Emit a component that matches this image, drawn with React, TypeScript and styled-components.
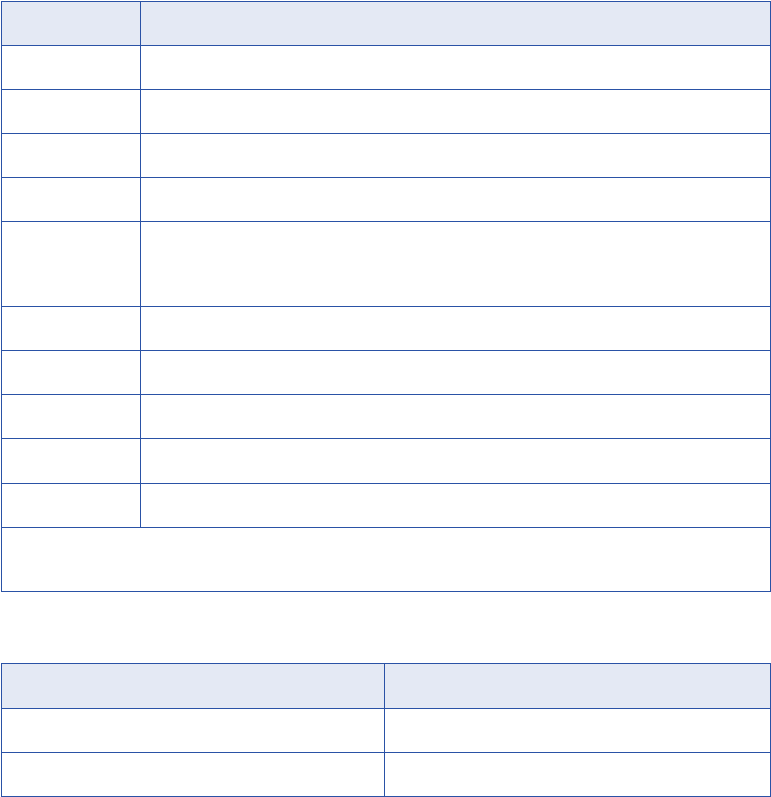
import styled, { createGlobalStyle } from "styled-components";

const GlobalStyle = createGlobalStyle`
  body {
    margin: 0;
    background: #ffffff;
    font-family: "Liberation Sans", Arial, sans-serif;
  }
`;

const firstRows = [44, 44, 44, 44, 85, 44, 44, 44, 45, 44];
const secondRows = [44, 44];

const App = () => {
  return (
    <Page>
      <GlobalStyle />
      <Table>
        <colgroup>
          <col style={{ width: 139 }} />
          <col />
        </colgroup>
        <thead>
          <Row $height={44}>
            <HeadCell />
            <HeadCell />
          </Row>
        </thead>
        <tbody>
          {firstRows.map((h, i) => (
            <Row key={i} $height={h}>
              <Cell />
              <Cell />
            </Row>
          ))}
          <Row $height={64}>
            <Cell colSpan={2} />
          </Row>
        </tbody>
      </Table>
      <Table>
        <colgroup>
          <col style={{ width: 383 }} />
          <col />
        </colgroup>
        <thead>
          <Row $height={45}>
            <HeadCell />
            <HeadCell />
          </Row>
        </thead>
        <tbody>
          {secondRows.map((h, i) => (
            <Row key={i} $height={h}>
              <Cell />
              <Cell />
            </Row>
          ))}
        </tbody>
      </Table>
    </Page>
  );
};

export default App;

const Page = styled.div`
  display: flex;
  flex-direction: column;
  gap: 71px;
  padding: 1px 0 0 1px;
  width: 770px;
`;

const Table = styled.table`
  width: 770px;
  border-collapse: collapse;
  table-layout: fixed;
`;

const Row = styled.tr<{ $height: number }>`
  height: ${(p) => p.$height}px;
`;

const Cell = styled.td`
  border: 1px solid #2a52a6;
  padding: 0;
  background: #ffffff;
`;

const HeadCell = styled.th`
  border: 1px solid #2a52a6;
  padding: 0;
  background: #e4e9f4;
`;
